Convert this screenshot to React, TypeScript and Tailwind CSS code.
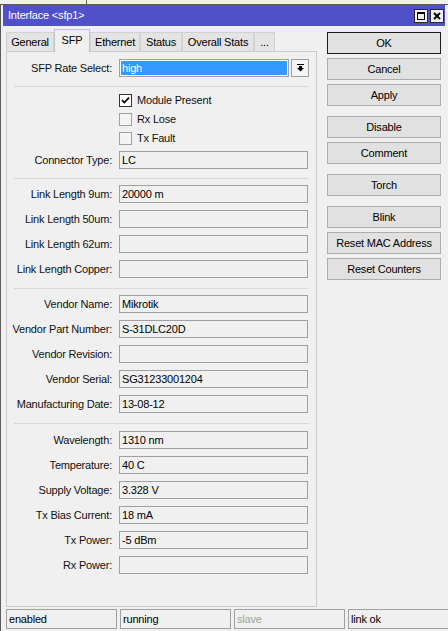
import React from 'react';

const labelCls =
  "w-[105px] shrink-0 text-right text-[11px] tracking-[-0.2px] text-[#111] whitespace-nowrap leading-none";
const valueCls =
  "ml-[7px] flex h-[18px] w-[189px] items-center border border-[#a0a0a0] bg-[#f0f0f0] pl-[2px] text-[11px] tracking-[-0.2px] text-black leading-none whitespace-nowrap";

function Field({ label, value }: { label: string; value?: string }) {
  return (
    <div className="flex h-[18px] items-center">
      <div className={labelCls}>{label}</div>
      <div className={valueCls}>{value}</div>
    </div>
  );
}

function Check({ label, checked }: { label: string; checked?: boolean }) {
  return (
    <div className="flex h-[19px] items-center pl-[112px]">
      {checked ? (
        <div className="flex h-[13px] w-[13px] items-center justify-center border border-[#333333] bg-white">
          <svg width="11" height="11" viewBox="0 0 11 11">
            <path d="M2 5.2 L4.3 7.6 L9 2.6" stroke="#000" strokeWidth="1.7" fill="none" />
          </svg>
        </div>
      ) : (
        <div className="h-[13px] w-[13px] border border-[#a0a0a0] bg-[#f4f4f4]" />
      )}
      <span className="ml-[5px] text-[11px] tracking-[-0.2px] text-[#111] leading-none">{label}</span>
    </div>
  );
}

function Sep({ cls }: { cls: string }) {
  return <div className={cls} />;
}

function Btn({ label, def }: { label: string; def?: boolean }) {
  return (
    <div
      className={
        def
          ? "flex h-[22px] w-[114px] items-center justify-center border border-[#1b1b1b] bg-[#e1e1e1] text-[11px] tracking-[-0.2px] text-black leading-none"
          : "flex h-[22px] w-[114px] items-center justify-center border border-[#adadad] bg-[#e1e1e1] text-[11px] tracking-[-0.2px] text-black leading-none"
      }
    >
      {label}
    </div>
  );
}

function Tab({ label, w, selected }: { label: string; w: string; selected?: boolean }) {
  if (selected) {
    return (
      <div
        className={`relative z-10 -mb-px flex h-[23px] items-start justify-center border-l border-r border-t border-[#c4c4c4] bg-[#f0f0f0] pt-[5px] text-[11px] tracking-[-0.2px] text-black leading-none ${w}`}
      >
        {label}
      </div>
    );
  }
  return (
    <div
      className={`flex h-[19px] items-center justify-center border-l border-r border-t border-[#d2d2d2] bg-[#e4e4e4] text-[11px] tracking-[-0.2px] text-black leading-none ${w}`}
    >
      {label}
    </div>
  );
}

export default function App() {
  return (
    <div className="flex h-[631px] w-[448px] flex-col overflow-hidden bg-[#f0f0f0] font-['Liberation_Sans',Arial,sans-serif]">
      {/* background strip */}
      <div className="flex h-[4px]">
        <div className="w-[86px]" />
        <div className="w-px bg-[#646464]" />
      </div>
      {/* window */}
      <div className="flex flex-1 flex-col border-l border-t border-[#5a5a5a] pl-[2px]">
        {/* title bar */}
        <div className="flex h-[21px] w-[442px] items-center bg-[#5050c8] pl-[5px] pr-[1px]">
          <span className="text-[11px] tracking-[-0.2px] text-white leading-none">Interface &lt;sfp1&gt;</span>
          <div className="ml-auto flex gap-[2px]">
            <div className="flex h-[14px] w-[14px] items-center justify-center border border-[#2a2a2a] bg-[#f0f0f0]">
              <svg width="8" height="8" viewBox="0 0 8 8">
                <rect x="0.5" y="0.5" width="7" height="7" stroke="#000" fill="none" />
                <line x1="0" y1="1.5" x2="8" y2="1.5" stroke="#000" />
              </svg>
            </div>
            <div className="flex h-[14px] w-[14px] items-center justify-center border border-[#2a2a2a] bg-[#f0f0f0]">
              <svg width="8" height="8" viewBox="0 0 8 8">
                <path d="M1 1 L7 7 M7 1 L1 7" stroke="#000" strokeWidth="1.8" />
              </svg>
            </div>
          </div>
        </div>

        {/* body */}
        <div className="flex pl-[3px]">
          {/* left column */}
          <div className="flex w-[311px] flex-col pt-[3px]">
            <div className="flex h-[22px] items-end">
              <Tab label="General" w="w-[48px]" />
              <Tab label="SFP" w="w-[36px]" selected />
              <Tab label="Ethernet" w="w-[50px]" />
              <Tab label="Status" w="w-[42px]" />
              <Tab label="Overall Stats" w="w-[72px]" />
              <Tab label="..." w="w-[21px]" />
            </div>
            <div className="flex h-[556px] flex-col border border-[#cbcbcb] pt-[7px]">
              {/* SFP Rate Select */}
              <div className="flex h-[18px] items-center">
                <div className={labelCls}>SFP Rate Select:</div>
                <div className="ml-[7px] h-[18px] w-[170px] border border-[#a0a0a0] bg-white p-[1px]">
                  <div className="flex h-full items-center bg-[#3399ff] pl-[1px] text-[11px] tracking-[-0.2px] text-white leading-none">
                    high
                  </div>
                </div>
                <div className="ml-[2px] flex h-[18px] w-[18px] items-center justify-center border border-[#a0a0a0] bg-[#f4f4f4]">
                  <svg width="7" height="8" viewBox="0 0 7 8">
                    <rect x="0" y="0" width="7" height="1" fill="#000" />
                    <rect x="2" y="2" width="3" height="2" fill="#000" />
                    <polygon points="0,4 7,4 3.5,7.5" fill="#000" />
                  </svg>
                </div>
              </div>
              <Sep cls="mx-[7px] mt-[9px] h-px bg-[#d9d9d9]" />
              <div className="mt-[4px] flex flex-col">
                <Check label="Module Present" checked />
                <Check label="Rx Lose" />
                <Check label="Tx Fault" />
              </div>
              <div className="mt-[3px]">
                <Field label="Connector Type:" value="LC" />
              </div>
              <Sep cls="mx-[7px] mt-[9px] h-px bg-[#d9d9d9]" />
              <div className="mt-[6px] flex flex-col gap-[7px]">
                <Field label="Link Length 9um:" value="20000 m" />
                <Field label="Link Length 50um:" />
                <Field label="Link Length 62um:" />
                <Field label="Link Length Copper:" />
              </div>
              <Sep cls="mx-[7px] mt-[10px] h-px bg-[#d9d9d9]" />
              <div className="mt-[6px] flex flex-col gap-[7px]">
                <Field label="Vendor Name:" value="Mikrotik" />
                <Field label="Vendor Part Number:" value="S-31DLC20D" />
                <Field label="Vendor Revision:" />
                <Field label="Vendor Serial:" value="SG31233001204" />
                <Field label="Manufacturing Date:" value="13-08-12" />
              </div>
              <Sep cls="mx-[7px] mt-[10px] h-px bg-[#d9d9d9]" />
              <div className="mt-[7px] flex flex-col gap-[7px]">
                <Field label="Wavelength:" value="1310 nm" />
                <Field label="Temperature:" value="40 C" />
                <Field label="Supply Voltage:" value="3.328 V" />
                <Field label="Tx Bias Current:" value="18 mA" />
                <Field label="Tx Power:" value="-5 dBm" />
                <Field label="Rx Power:" />
              </div>
            </div>
          </div>

          {/* right column */}
          <div className="ml-[10px] flex w-[114px] flex-col pt-[6px]">
            <div className="flex flex-col gap-[4px]">
              <Btn label="OK" def />
              <Btn label="Cancel" />
              <Btn label="Apply" />
            </div>
            <div className="mt-[10px] flex flex-col gap-[4px]">
              <Btn label="Disable" />
              <Btn label="Comment" />
            </div>
            <div className="mt-[10px]">
              <Btn label="Torch" />
            </div>
            <div className="mt-[10px] flex flex-col gap-[4px]">
              <Btn label="Blink" />
              <Btn label="Reset MAC Address" />
              <Btn label="Reset Counters" />
            </div>
          </div>
        </div>

        {/* status bar */}
        <div className="mt-[2px] flex h-[20px] gap-[3px] pl-[3px]">
          <div className="flex w-[111px] items-center border border-[#a0a0a0] pl-[2px] text-[11px] tracking-[-0.2px] text-black leading-none">enabled</div>
          <div className="flex w-[111px] items-center border border-[#a0a0a0] pl-[2px] text-[11px] tracking-[-0.2px] text-black leading-none">running</div>
          <div className="flex w-[111px] items-center border border-[#a0a0a0] pl-[2px] text-[11px] tracking-[-0.2px] text-[#a0a0a0] leading-none">slave</div>
          <div className="flex flex-1 items-center border-b border-l border-t border-[#a0a0a0] pl-[2px] text-[11px] tracking-[-0.2px] text-black leading-none">link ok</div>
        </div>
      </div>
    </div>
  );
}
